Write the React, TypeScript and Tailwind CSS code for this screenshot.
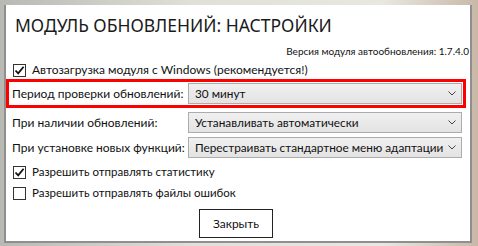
// Окно настроек модуля обновлений поверх размытого рабочего стола

const title = { fontFamily: '"Noto Sans", "Open Sans", sans-serif' };
const body = { fontFamily: 'Lato, "Noto Sans", sans-serif' };

function Check({ checked }: { checked: boolean }) {
  return (
    <span className="w-[13px] h-[13px] border border-[#333] bg-white flex items-center justify-center shrink-0">
      {checked && (
        <svg width="11" height="11" viewBox="0 0 11 11">
          <path d="M1.5 5.5 L4.2 8.4 L9.6 1.8" fill="none" stroke="#111" strokeWidth="1.8" />
        </svg>
      )}
    </span>
  );
}

function Chevron() {
  return (
    <svg width="8" height="5" viewBox="0 0 8 5" className="shrink-0">
      <path d="M0.5 0.5 L4 4 L7.5 0.5" fill="none" stroke="#444" strokeWidth="1" />
    </svg>
  );
}

function Select({ value }: { value: string }) {
  return (
    <div className="flex-1 h-[21px] flex items-center justify-between pl-[6px] pr-[5px] border border-[#acacac] bg-gradient-to-b from-[#f0f0f0] to-[#e3e3e3] text-[11.8px] text-[#111] whitespace-nowrap">
      <span>{value}</span>
      <Chevron />
    </div>
  );
}

function Row({ label, value }: { label: string; value: string }) {
  return (
    <div className="flex items-center">
      <span className="w-[176px] shrink-0 text-[12px] text-[#111] whitespace-nowrap">{label}</span>
      <Select value={value} />
    </div>
  );
}

export default function App() {
  return (
    <div
      className="w-[478px] h-[246px] overflow-hidden pt-[5px] pl-[4px] pr-[6px] pb-[3px] bg-[linear-gradient(90deg,#b9b9b4_0%,#e0e0d8_40%,#e8e8e0_80%,#c9b8a8_100%)]"
      style={body}
    >
      <div className="h-full bg-white border-x-2 border-b-2 border-[#8f8f8f] flex flex-col">
        <div className="px-[9px] pt-[8px] text-[17.5px] leading-[24px] text-[#1a1a1a] whitespace-nowrap" style={title}>
          МОДУЛЬ ОБНОВЛЕНИЙ: НАСТРОЙКИ
        </div>
        <div className="pr-[1px] mt-[7px] text-right text-[10px] leading-[14px] text-[#111] whitespace-nowrap">
          Версия модуля автообновления: 1.7.4.0
        </div>
        <div className="flex items-center gap-[6px] pl-[7px] mt-[4px] text-[12px] leading-[16px] text-[#111] whitespace-nowrap">
          <Check checked />
          <span>Автозагрузка модуля с Windows (рекомендуется!)</span>
        </div>
        <div className="mr-[4px] mt-[1px] border-[3px] border-[#ff0000] pl-[3px] pr-[1px] py-[1px]">
          <Row label="Период проверки обновлений:" value="30 минут" />
        </div>
        <div className="flex flex-col gap-[4px] pl-[6px] pr-[8px] mt-[4px]">
          <Row label="При наличии обновлений:" value="Устанавливать автоматически" />
          <Row label="При установке новых функций:" value="Перестраивать стандартное меню адаптации" />
        </div>
        <div className="flex flex-col gap-[7px] pl-[7px] mt-[7px] text-[11.5px] leading-[14px] text-[#111] whitespace-nowrap">
          <div className="flex items-center gap-[6px]">
            <Check checked />
            <span>Разрешить отправлять статистику</span>
          </div>
          <div className="flex items-center gap-[6px]">
            <Check checked={false} />
            <span>Разрешить отправлять файлы ошибок</span>
          </div>
        </div>
        <div className="flex justify-center mt-[9px] pr-[4px]">
          <button className="w-[74px] h-[29px] border border-[#222] bg-white text-[12px] text-[#111]">
            Закрыть
          </button>
        </div>
      </div>
    </div>
  );
}
